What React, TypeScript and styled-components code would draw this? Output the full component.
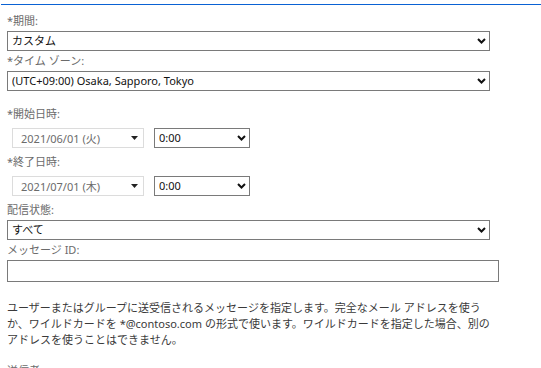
import React from 'react';
import styled, { createGlobalStyle } from 'styled-components';

const GlobalStyle = createGlobalStyle`
    html, body {
        margin: 0;
        padding: 0;
        background: #ffffff;
    }
    body {
        font-family: 'Noto Sans', 'Noto Sans CJK JP', sans-serif;
        font-size: 11px;
        color: #333333;
    }
`;

const Chevron = () => (
    <svg width='9' height='6' viewBox='0 0 9 6'>
        <path d='M1 1 L4.5 4.5 L8 1' fill='none' stroke='#111' strokeWidth='2' />
    </svg>
);

const Caret = () => (
    <svg width='7' height='4' viewBox='0 0 7 4'>
        <path d='M0 0 L7 0 L3.5 4 Z' fill='#222' />
    </svg>
);

type SelectProps = { value: string; width?: number; options?: string[] };

const DropDown = ({ value, width, options }: SelectProps) => (
    <SelectWrap $width={width}>
        <NativeSelect defaultValue={value}>
            {(options || [value]).map((o) => (
                <option key={o}>{o}</option>
            ))}
        </NativeSelect>
        <ChevronSlot>
            <Chevron />
        </ChevronSlot>
    </SelectWrap>
);

const DatePicker = ({ value }: { value: string }) => (
    <DateBox>
        <DateText>{value}</DateText>
        <Caret />
    </DateBox>
);

// Message trace custom query form
const App = () => {
    return (
        <>
            <GlobalStyle />
            <Panel>
                <Label>*期間:</Label>
                <DropDown value='カスタム' options={['カスタム', '過去 7 日間']} />

                <Label>*タイム ゾーン:</Label>
                <DropDown value='(UTC+09:00) Osaka, Sapporo, Tokyo' />

                <Label $spaced>*開始日時:</Label>
                <DateRow>
                    <DatePicker value='2021/06/01 (火)' />
                    <DropDown value='0:00' width={96} />
                </DateRow>

                <Label>*終了日時:</Label>
                <DateRow>
                    <DatePicker value='2021/07/01 (木)' />
                    <DropDown value='0:00' width={96} />
                </DateRow>

                <Label>配信状態:</Label>
                <DropDown value='すべて' />

                <Label>メッセージ ID:</Label>
                <TextInput type='text' />

                <Help>
                    ユーザーまたはグループに送受信されるメッセージを指定します。完全なメール アドレスを使う<br />
                    か、ワイルドカードを *@contoso.com の形式で使います。ワイルドカードを指定した場合、別の<br />
                    アドレスを使うことはできません。
                </Help>

                <Label $spaced>送信者:</Label>
            </Panel>
        </>
    );
};

const Panel = styled.div`
    margin: 4px 0 0 1px;
    border-top: 1px solid #0a62d4;
    padding: 6px 0 0 6px;
    display: flex;
    flex-direction: column;
    align-items: flex-start;
`;

const Label = styled.label<{ $spaced?: boolean }>`
    display: block;
    line-height: 16px;
    color: #6b6b6b;
    margin: ${(p) => (p.$spaced ? '15px' : '2px')} 0 2px 0;
`;

const SelectWrap = styled.div<{ $width?: number }>`
    position: relative;
    width: ${(p) => (p.$width ? `${p.$width}px` : '483px')};
    height: 20px;
`;

const NativeSelect = styled.select`
    appearance: none;
    width: 100%;
    height: 20px;
    box-sizing: border-box;
    margin: 0;
    padding: 0 18px 0 4px;
    border: 1px solid #7a7a7a;
    border-radius: 0;
    background: #ffffff;
    color: #111111;
    font-family: 'Noto Sans', 'Noto Sans CJK JP', sans-serif;
    font-size: 11px;
    line-height: 18px;
`;

const ChevronSlot = styled.span`
    position: absolute;
    right: 4px;
    top: 7px;
    display: flex;
    pointer-events: none;
`;

const DateRow = styled.div`
    display: flex;
    gap: 10px;
    margin: 4px 0 4px 5px;
`;

const DateBox = styled.div`
    width: 132px;
    height: 20px;
    box-sizing: border-box;
    border: 1px solid #dcdcdc;
    display: flex;
    align-items: center;
    justify-content: space-between;
    padding: 0 5px 0 8px;
`;

const DateText = styled.span`
    color: #6b6b6b;
    font-size: 11px;
`;

const TextInput = styled.input`
    width: 492px;
    height: 22px;
    box-sizing: border-box;
    margin: 0;
    border: 1px solid #7a7a7a;
    border-radius: 0;
    padding: 0 4px;
    font-family: 'Noto Sans', 'Noto Sans CJK JP', sans-serif;
    font-size: 11px;
`;

const Help = styled.p`
    margin: 18px 0 0 0;
    line-height: 16px;
    color: #3a3a3a;
    white-space: nowrap;
`;

export default App;
